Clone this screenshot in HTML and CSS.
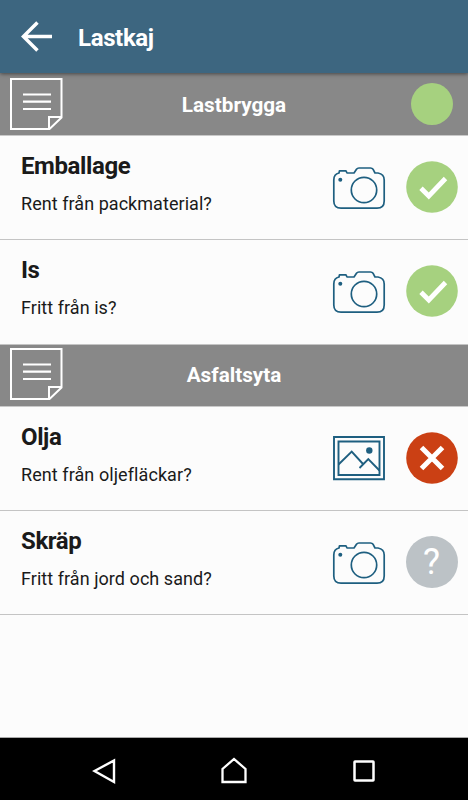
FILE: index.html
```html
<!DOCTYPE html>
<html lang="sv">
<head>
<meta charset="utf-8">
<title>Lastkaj</title>
<link rel="stylesheet" href="styles.css">
</head>
<body>
<svg class="defs" aria-hidden="true">
  <symbol id="note" viewBox="0 0 54 54">
    <path d="M2 2H52.500V40.500L40.500 52H2ZM40 52V40H52" fill="none" stroke="#fff" stroke-width="2"/>
    <path d="M14 17.500H42M14 24.700H42M14 32H42" fill="none" stroke="#fff" stroke-width="2.200"/>
  </symbol>
  <symbol id="camera" viewBox="0 0 54 44">
    <g fill="none" stroke="#1e5f80" stroke-width="1.700" stroke-linejoin="round">
      <path d="M7 7L7.500 4.800H14L15 7H22L24.500 3.200Q25.300 2 27 2H38.500Q40.200 2 41 3.200L43 7H46Q52.200 8 52.200 14V35Q52.200 42.200 45 42.200H9Q1.800 42.200 1.800 35V14Q1.800 8 7 7Z"/>
      <circle cx="32" cy="24" r="12.700"/>
    </g>
    <circle cx="8.300" cy="13.700" r="2" fill="#1e5f80"/>
  </symbol>
  <symbol id="picture" viewBox="0 0 54 46">
    <g fill="none" stroke="#1e5f80" stroke-width="1.900">
      <path d="M2 2H52V44.200H2ZM6.500 6.500H47.500V40H6.500Z"/>
      <path d="M6.500 29.500L19.700 16.500L31.500 29.500M27.500 33L36.300 24L47.500 35.500"/>
    </g>
    <circle cx="37.300" cy="15.500" r="3.200" fill="#1e5f80"/>
  </symbol>
  <symbol id="check" viewBox="0 0 52 52">
    <circle cx="26" cy="26" r="25.800" fill="#a6d17f"/>
    <path d="M15 27.200L22.800 35L39.500 17.500" fill="none" stroke="#fff" stroke-width="4.800"/>
  </symbol>
  <symbol id="cross" viewBox="0 0 52 52">
    <circle cx="26" cy="26" r="25.800" fill="#cb4014"/>
    <path d="M15.500 15.500L36.500 36.500M36.500 15.500L15.500 36.500" fill="none" stroke="#fff" stroke-width="5"/>
  </symbol>
</svg>
<div class="screen">
  <header class="appbar">
    <svg class="back" viewBox="0 0 32 32"><path d="M32 16H2M17 1.500L2.500 16L17 30.500" fill="none" stroke="#fff" stroke-width="3.600"/></svg>
    <h1 class="heading">Lastkaj</h1>
  </header>
  <main class="list">
    <section class="group first">
      <svg class="note"><use href="#note"/></svg>
      <h2 class="group-name">Lastbrygga</h2>
      <span class="side"><span class="dot"></span></span>
    </section>
    <article class="row">
      <div class="text"><h3 class="title">Emballage</h3><p class="question">Rent från packmaterial?</p></div>
      <svg class="camera"><use href="#camera"/></svg>
      <svg class="status"><use href="#check"/></svg>
    </article>
    <article class="row tall">
      <div class="text"><h3 class="title">Is</h3><p class="question">Fritt från is?</p></div>
      <svg class="camera"><use href="#camera"/></svg>
      <svg class="status"><use href="#check"/></svg>
    </article>
    <section class="group">
      <svg class="note"><use href="#note"/></svg>
      <h2 class="group-name">Asfaltsyta</h2>
      <span class="side"></span>
    </section>
    <article class="row">
      <div class="text"><h3 class="title">Olja</h3><p class="question wide">Rent från oljefläckar?</p></div>
      <svg class="picture"><use href="#picture"/></svg>
      <svg class="status"><use href="#cross"/></svg>
    </article>
    <article class="row">
      <div class="text"><h3 class="title">Skräp</h3><p class="question">Fritt från jord och sand?</p></div>
      <svg class="camera"><use href="#camera"/></svg>
      <span class="status unknown">?</span>
    </article>
  </main>
  <nav class="navbar">
    <svg class="nav-icon" viewBox="0 0 28 28"><path d="M4.500 14L24 3.500V25Z" fill="none" stroke="#fff" stroke-width="2.400"/></svg>
    <svg class="nav-icon" viewBox="0 0 28 28"><path d="M2.500 25V12L14 2L25.500 12V25Z" fill="none" stroke="#fff" stroke-width="2.300"/></svg>
    <svg class="nav-icon" viewBox="0 0 28 28"><rect x="4.500" y="4.500" width="19" height="19" rx=".5" fill="none" stroke="#fff" stroke-width="2.500"/></svg>
  </nav>
</div>
</body>
</html>
```
FILE: styles.css
```css
* { box-sizing: border-box; }
body { margin: 0; font-family: Roboto, "Liberation Sans", sans-serif; color: #1a1a1a; }
h1, h2, h3, p { margin: 0; }
svg { display: block; flex: none; }
.defs { position: absolute; width: 0; height: 0; }
.screen { width: 468px; height: 800px; display: flex; flex-direction: column; background: #fcfcfc; }
.appbar { position: relative; height: 73px; flex: none; display: flex; align-items: center; gap: 26px; padding-left: 21px; background: #3d6680; box-shadow: 0 1px 4px rgba(0, 0, 0, .5); }
.back { width: 31px; height: 31px; }
.heading { font-size: 24px; line-height: 28px; font-weight: 700; letter-spacing: -.35px; color: #fff; padding-top: 2px; }
.list { flex: 1; }
.group { height: 62px; display: flex; align-items: center; padding: 0 9px 3px; background: #888; border-bottom: 1px solid #c9c9c9; }
.group.first { height: 63px; padding-bottom: 0; }
.note { width: 54px; height: 54px; }
.group-name { flex: 1; text-align: center; font-size: 20.7px; line-height: 24px; font-weight: 700; color: #fff; padding-top: 1px; }
.side { width: 54px; display: flex; justify-content: flex-end; padding-right: 6px; }
.dot { width: 42px; height: 42px; border-radius: 50%; background: #a6d17f; }
.row { height: 104px; display: flex; align-items: flex-start; padding: 25px 10.500px 0 21px; border-bottom: 1px solid #c4c4c4; }
.row.tall { height: 105px; }
.text { flex: 1; margin-top: -9px; }
.title { font-size: 24px; line-height: 28px; font-weight: 700; letter-spacing: -.4px; }
.question { font-size: 18px; line-height: 22px; margin-top: 13px; letter-spacing: .05px; }
.question.wide { letter-spacing: .08px; }
.camera, .picture { width: 54px; height: 44px; margin: 4.500px 19.500px 0 0; }
.picture { height: 46px; margin-top: 3px; }
.status { width: 52px; height: 52px; }
.unknown { border-radius: 50%; background: #bcc2c6; color: #fff; font-size: 36px; line-height: 53px; text-align: center; }
.navbar { height: 63px; flex: none; display: flex; align-items: center; justify-content: space-between; padding: 3px 90px 0; background: #000; border-top: 1px solid #aaa; }
.nav-icon { width: 28px; height: 28px; }
```
